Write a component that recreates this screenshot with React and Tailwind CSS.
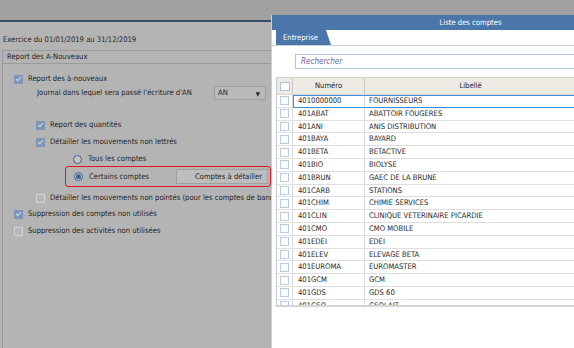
import React from "react";

const rows = [
  ["4010000000", "FOURNISSEURS"],
  ["401ABAT", "ABATTOIR FOUGERES"],
  ["401ANI", "ANIS DISTRIBUTION"],
  ["401BAYA", "BAYARD"],
  ["401BETA", "BETACTIVE"],
  ["401BIO", "BIOLYSE"],
  ["401BRUN", "GAEC DE LA BRUNE"],
  ["401CARB", "STATIONS"],
  ["401CHIM", "CHIMIE SERVICES"],
  ["401CLIN", "CLINIQUE VETERINAIRE PICARDIE"],
  ["401CMO", "CMO MOBILE"],
  ["401EDEI", "EDEI"],
  ["401ELEV", "ELEVAGE BETA"],
  ["401EUROMA", "EUROMASTER"],
  ["401GCM", "GCM"],
  ["401GDS", "GDS 60"],
  ["401GEO", "GEOLAIT"],
];

function DimCheck({ checked }) {
  if (checked) {
    return (
      <span className="w-[9px] h-[9px] bg-[#7d95b6] flex items-center justify-center shrink-0">
        <svg width="7" height="6" viewBox="0 0 7 6">
          <path d="M1 3 L2.8 4.7 L6 1.2" stroke="#c9d3e0" strokeWidth="1.2" fill="none" />
        </svg>
      </span>
    );
  }
  return <span className="w-[9px] h-[9px] border border-[#d4d4d4] bg-[#b8b8b8] shrink-0" />;
}

function DimRadio({ checked }) {
  return (
    <span className="w-[9px] h-[9px] rounded-full border border-[#3e628c] bg-[#c4c4c4] flex items-center justify-center shrink-0">
      {checked && <span className="w-[5px] h-[5px] rounded-full bg-[#3a6699]" />}
    </span>
  );
}

function Row({ children, pl, top = 0, h = 13 }) {
  return (
    <div className="flex items-center gap-[6px]" style={{ paddingLeft: pl, marginTop: top, height: h }}>
      {children}
    </div>
  );
}

export default function App() {
  return (
    <div
      className="relative w-[574px] h-[348px] overflow-hidden bg-[#b4b4b4] text-[7.6px] text-[#262626]"
      style={{ fontFamily: '"DejaVu Sans Condensed", "DejaVu Sans", sans-serif' }}
    >
      {/* background window */}
      <div className="h-[20px] bg-[#a1a1a1]" />
      <div className="h-[2px] bg-[#3c4e66]" />
      <div className="h-[28px] flex items-end pb-[6px] pl-[3px] leading-none">
        Exercice du 01/01/2019 au 31/12/2019
      </div>
      <div className="ml-[2px] w-[300px] h-[300px] border border-[#9a9a9a]">
        <div className="h-[13px] border-b border-[#9a9a9a] pl-[4px] flex items-center leading-none">
          Report des A-Nouveaux
        </div>
        <Row pl={11} top={10} h={10}>
          <DimCheck checked />
          <span className="ml-[-1px]">Report des à-nouveaux</span>
        </Row>
        <div className="flex items-center pl-[34px] h-[14px] mt-[2px]">
          <span className="w-[177px]">Journal dans lequel sera passé l'écriture d'AN</span>
          <span className="w-[52px] h-[14px] border border-[#9e9e9e] bg-[#b9b9b9] flex items-center justify-between px-[3px]">
            <span>AN</span>
            <span className="text-[6px] mr-[2px]">▼</span>
          </span>
        </div>
        <Row pl={33} top={20} h={10}>
          <DimCheck checked />
          <span className="ml-[-1px]">Report des quantités</span>
        </Row>
        <Row pl={33} top={7} h={10}>
          <DimCheck checked />
          <span className="ml-[-1px]">Détailler les mouvements non lettrés</span>
        </Row>
        <Row pl={70} top={6} h={12}>
          <DimRadio />
          <span>Tous les comptes</span>
        </Row>
        <div className="ml-[62px] mt-[1px] w-[206px] h-[21px] border-[1.5px] border-[#e3141c] rounded-[3px] flex items-center pl-[8px]">
          <DimRadio checked />
          <span className="ml-[6px] w-[87px]">Certains comptes</span>
          <span className="w-[92px] h-[15px] border border-[#a0a0a0] bg-[#bdbdbd] flex items-center justify-end pr-[5px]">
            Comptes à détailler
          </span>
        </div>
        <Row pl={33} top={6} h={10}>
          <DimCheck />
          <span className="ml-[-1px] whitespace-nowrap">Détailler les mouvements non pointés (pour les comptes de banque)</span>
        </Row>
        <Row pl={11} top={6} h={10}>
          <DimCheck checked />
          <span className="ml-[-1px]">Suppression des comptes non utilisés</span>
        </Row>
        <Row pl={11} top={7} h={10}>
          <DimCheck />
          <span className="ml-[-1px]">Suppression des activités non utilisées</span>
        </Row>
      </div>

      {/* modal */}
      <div className="absolute left-[271px] top-[15px] w-[398px] h-[340px] bg-white border-l border-[#c9cfd6] flex flex-col">
        <div className="h-[15px] bg-[#4b76aa] text-white flex items-center justify-center leading-none">
          Liste des comptes
        </div>
        <div className="h-[16px] flex items-end border-b border-[#c8d0d9] pl-[4px]">
          <div
            className="h-[15px] w-[55px] bg-[#4b76aa] text-white flex items-center pl-[7px] leading-none"
            style={{ clipPath: "polygon(0 0, 50px 0, 55px 100%, 0 100%)" }}
          >
            Entreprise
          </div>
        </div>
        <div className="h-[31px] pl-[23px] pt-[8px]">
          <div className="h-[15px] border border-[#b3c7de] flex items-center pl-[5px] italic text-[#6c6899] text-[8px]">
            Rechercher
          </div>
        </div>
        <div className="ml-[4px] border-l border-[#c9c9c9] border-t border-t-[#d6d2cd] flex flex-col">
          <div className="h-[17px] bg-[#ede9e3] flex border-b border-[#d8d4cf]">
            <div className="w-[16px] flex items-center justify-center border-r border-[#cbc7c2]">
              <span className="w-[10px] h-[9px] border border-[#a9c4e0] bg-white" />
            </div>
            <div className="w-[72px] flex items-center justify-center border-r border-[#cbc7c2]">Numéro</div>
            <div className="w-[212px] flex items-center justify-center border-r border-[#cbc7c2]">Libellé</div>
            <div className="flex-1" />
          </div>
          <div className="h-[212px] overflow-hidden border-b-2 border-[#d4d4d4]">
            {rows.map(([num, lib], i) => (
              <div key={num} className="relative flex h-[12.8px] border-b border-[#dedede]">
                <div className="w-[16px] flex items-center justify-center border-r border-[#dadada]">
                  <span className="w-[9px] h-[9px] border border-[#b5cde8] bg-white" />
                </div>
                <div className="w-[72px] flex items-center pl-[5px] border-r border-[#dadada] leading-none">{num}</div>
                <div className="flex-1 flex items-center pl-[4px] leading-none">{lib}</div>
                {i === 0 && (
                  <div className="absolute left-[16px] right-0 top-0 bottom-[-1px] border border-[#3d8fe0]" />
                )}
              </div>
            ))}
          </div>
        </div>
      </div>
    </div>
  );
}
